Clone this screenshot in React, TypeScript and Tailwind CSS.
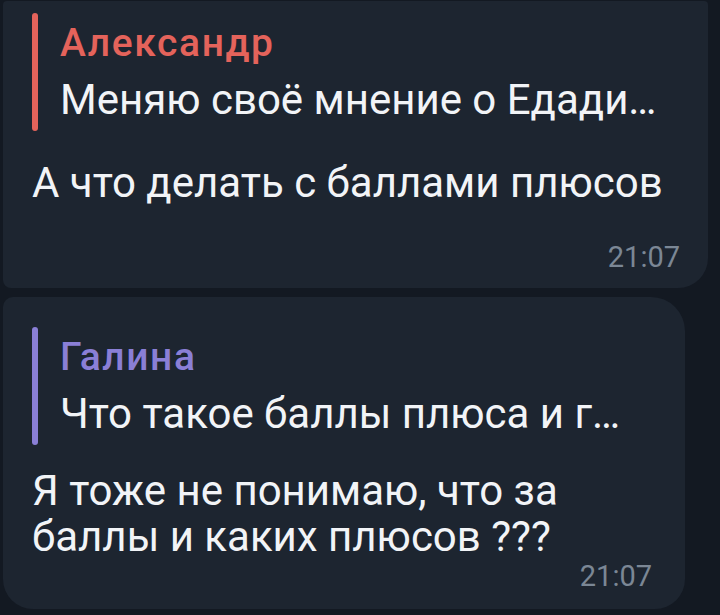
type Message = {
  author: string;
  accent: string;
  quote: string;
  lines: string[];
  time: string;
};

const messages: Message[] = [
  {
    author: "Александр",
    accent: "red",
    quote: "Меняю своё мнение о Едади…",
    lines: ["А что делать с баллами плюсов"],
    time: "21:07",
  },
  {
    author: "Галина",
    accent: "violet",
    quote: "Что такое баллы плюса и г…",
    lines: ["Я тоже не понимаю, что за", "баллы и каких плюсов ???"],
    time: "21:07",
  },
];

function ReplyPreview({ author, accent, quote }: Pick<Message, "author" | "accent" | "quote">) {
  const barClass = accent === "red" ? "bg-[#e4635b]" : "bg-[#8a7fd6]";
  const nameClass = accent === "red" ? "text-[#e4635b]" : "text-[#8a7fd6]";

  return (
    <div className="flex h-[118px]">
      <div className={`w-[6px] shrink-0 rounded-full ${barClass}`} />
      <div className="ml-[22px] flex flex-col">
        <div className={`mt-[10px] text-[39px] leading-[40px] font-medium tracking-[1.6px] ${nameClass}`}>{author}</div>
        <div className="mt-[15px] text-[42px] leading-[44px] text-[#f2f4f7] whitespace-nowrap">{quote}</div>
      </div>
    </div>
  );
}

export default function App() {
  return (
    <div className="w-[720px] h-[615px] overflow-hidden bg-[#131922] font-['Roboto',sans-serif] pt-[1px]">
      <div className="flex flex-col gap-[9px]">
        {/* first bubble, its top runs off the screen */}
        <div className="ml-[3px] w-[705px] h-[287px] bg-[#1d2530] rounded-t-[4px] rounded-bl-[8px] rounded-br-[30px] pl-[29px] pr-[28px] pt-[12px]">
          <ReplyPreview {...messages[0]} />
          <div className="mt-[30px] text-[42px] leading-[44px] text-[#f2f4f7]">{messages[0].lines[0]}</div>
          <div className="mt-[37px] text-right text-[29px] leading-[30px] text-[#7b8795]">{messages[0].time}</div>
        </div>

        <div className="ml-[3px] w-[682px] h-[312px] bg-[#1d2530] rounded-tl-[10px] rounded-tr-[34px] rounded-b-[30px] pl-[29px] pr-[33px] pt-[30px]">
          <ReplyPreview {...messages[1]} />
          <div className="mt-[23px] text-[42px] leading-[46px] text-[#f2f4f7]">
            {messages[1].lines.map((line) => (
              <div key={line}>{line}</div>
            ))}
          </div>
          <div className="mt-[1px] text-right text-[29px] leading-[30px] text-[#7b8795]">{messages[1].time}</div>
        </div>
      </div>
    </div>
  );
}
